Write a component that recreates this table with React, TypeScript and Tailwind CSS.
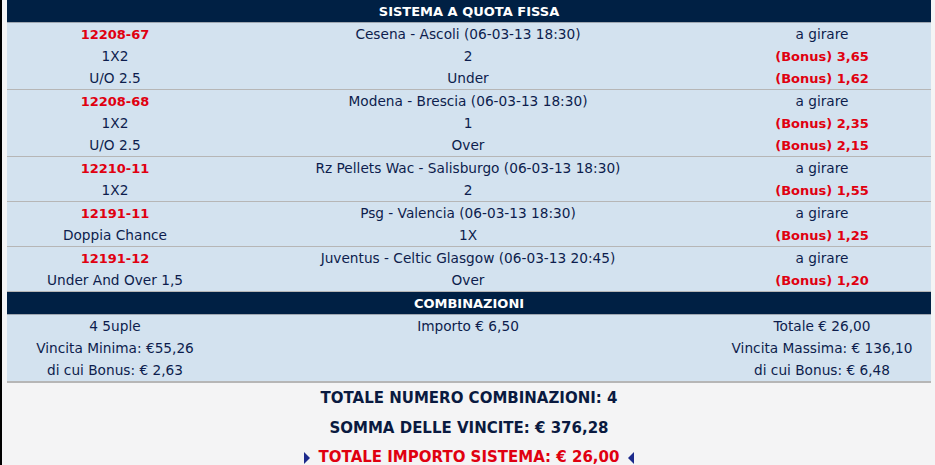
const events = [
  {
    code: '12208-67',
    match: 'Cesena - Ascoli (06-03-13 18:30)',
    lines: [
      { market: '1X2', pick: '2', odd: '3,65' },
      { market: 'U/O 2.5', pick: 'Under', odd: '1,62' }
    ]
  },
  {
    code: '12208-68',
    match: 'Modena - Brescia (06-03-13 18:30)',
    lines: [
      { market: '1X2', pick: '1', odd: '2,35' },
      { market: 'U/O 2.5', pick: 'Over', odd: '2,15' }
    ]
  },
  {
    code: '12210-11',
    match: 'Rz Pellets Wac - Salisburgo (06-03-13 18:30)',
    lines: [{ market: '1X2', pick: '2', odd: '1,55' }]
  },
  {
    code: '12191-11',
    match: 'Psg - Valencia (06-03-13 18:30)',
    lines: [{ market: 'Doppia Chance', pick: '1X', odd: '1,25' }]
  },
  {
    code: '12191-12',
    match: 'Juventus - Celtic Glasgow (06-03-13 20:45)',
    lines: [{ market: 'Under And Over 1,5', pick: 'Over', odd: '1,20' }]
  }
];

function Row({ left, mid, right }: { left: React.ReactNode; mid: React.ReactNode; right: React.ReactNode }) {
  return (
    <div className="grid grid-cols-[216px_490px_218px] h-[22px] items-center text-center">
      <div>{left}</div>
      <div>{mid}</div>
      <div>{right}</div>
    </div>
  );
}

function Bar({ title }: { title: string }) {
  return (
    <div className="relative z-10 h-[23px] bg-[#002044] text-white font-bold text-[13px] flex items-center justify-center border-b border-[#9fa7b1] pt-[1px]">
      {title}
    </div>
  );
}

export default function App() {
  return (
    <div className="w-[935px] h-[465px] bg-[#f4f4f5] flex font-['DejaVu_Sans',sans-serif] text-[13.7px] text-[#0d1d4d] overflow-hidden">
      <div className="w-[2px] bg-black" />
      <div className="w-[924px] ml-[5px]">
        <Bar title="SISTEMA A QUOTA FISSA" />
        {events.map((ev) => (
          <div
            key={ev.code}
            className="relative bg-[#d3e2ef] border-b-2 border-[#b6b6b6] -mb-px last:border-b-0 last:mb-0"
          >
            <Row
              left={<span className="font-bold text-[13px] text-[#e00010]">{ev.code}</span>}
              mid={ev.match}
              right="a girare"
            />
            {ev.lines.map((l, i) => (
              <Row
                key={i}
                left={l.market}
                mid={l.pick}
                right={<span className="font-bold text-[13px] text-[#e00010]">(Bonus) {l.odd}</span>}
              />
            ))}
          </div>
        ))}
        <Bar title="COMBINAZIONI" />
        <div className="bg-[#d3e2ef] border-b-2 border-[#b6b6b6]">
          <Row left="4 5uple" mid="Importo € 6,50" right="Totale € 26,00" />
          <Row left="Vincita Minima: €55,26" mid="" right="Vincita Massima: € 136,10" />
          <Row left="di cui Bonus: € 2,63" mid="" right="di cui Bonus: € 6,48" />
        </div>
        <div className="flex flex-col items-center font-bold text-[15px] leading-[29.5px] pt-[1px] text-[#0a1a40]">
          <div>TOTALE NUMERO COMBINAZIONI: 4</div>
          <div>SOMMA DELLE VINCITE: € 376,28</div>
          <div className="flex items-center gap-[9px]">
            <svg width="6" height="12" viewBox="0 0 6 12"><path d="M0 0 L6 6 L0 12 Z" fill="#1c2a8c" /></svg>
            <span className="text-[#e00010]">TOTALE IMPORTO SISTEMA: € 26,00</span>
            <svg width="6" height="12" viewBox="0 0 6 12"><path d="M6 0 L0 6 L6 12 Z" fill="#1c2a8c" /></svg>
          </div>
        </div>
      </div>
    </div>
  );
}
